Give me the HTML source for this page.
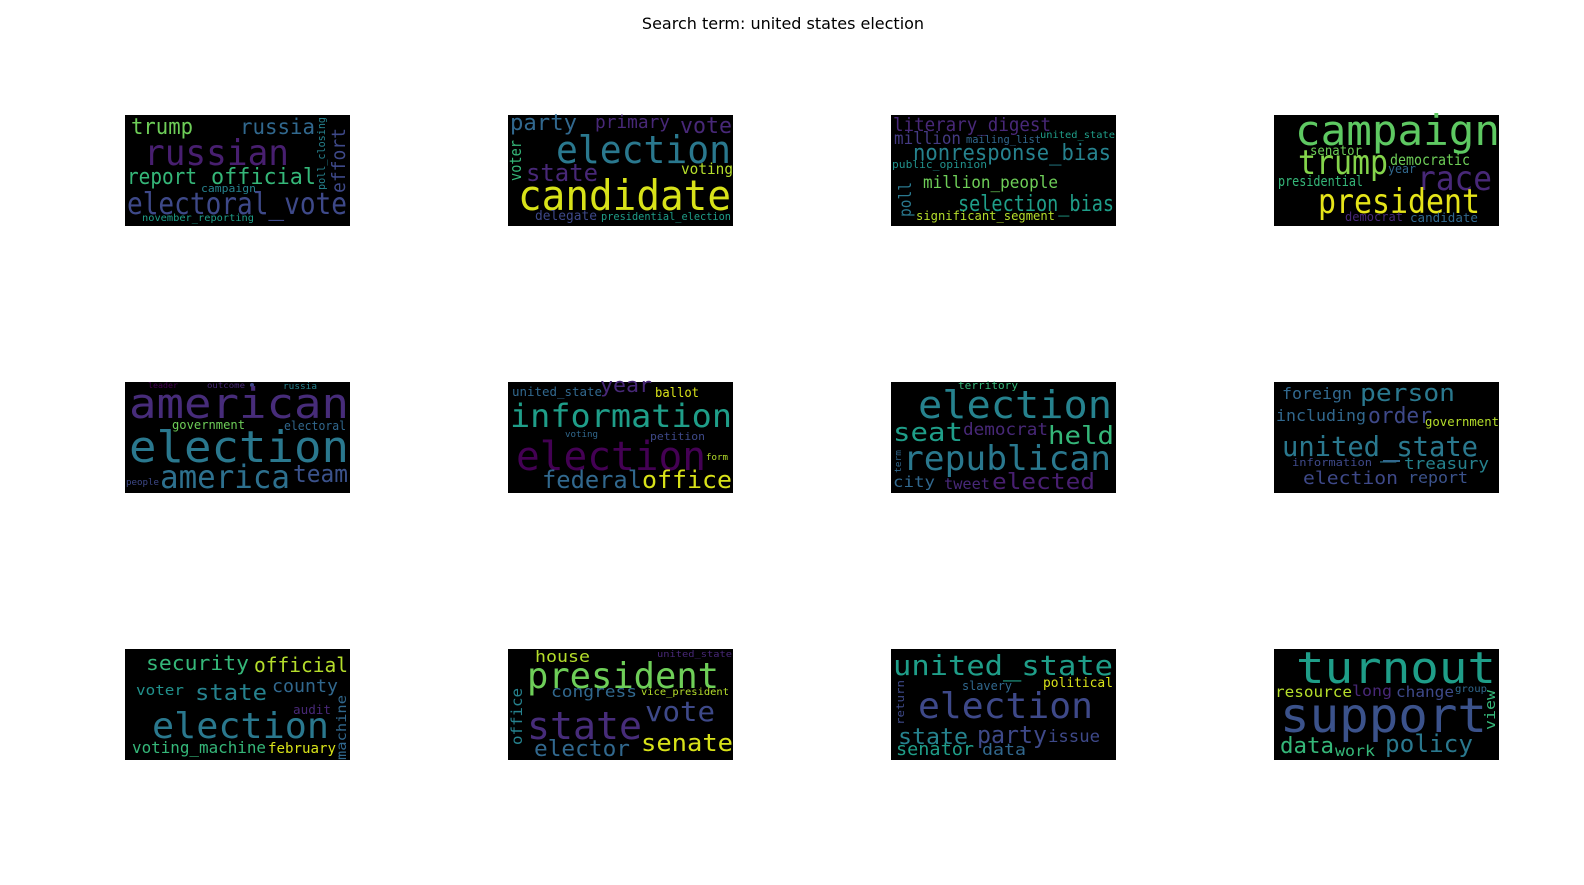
<!DOCTYPE html>
<html><head><meta charset="utf-8"><style>
html,body{margin:0;padding:0;background:#fff;overflow:hidden;width:1584px;height:885px;}
svg{display:block;position:absolute;left:0;top:0}
.w text{font-family:"DejaVu Sans Mono","Liberation Mono",monospace;}
</style></head><body>
<svg width="1584" height="885" viewBox="0 0 1584 885" xmlns="http://www.w3.org/2000/svg">
<rect width="1584" height="885" fill="#fff"/>
<text x="783" y="29" text-anchor="middle" font-family="DejaVu Sans, Liberation Sans, sans-serif" font-size="16" fill="#000">Search term: united states election</text>
<g fill="#000">
<rect x="125" y="115" width="225" height="111"/><rect x="508" y="115" width="225" height="111"/><rect x="891" y="115" width="225" height="111"/><rect x="1274" y="115" width="225" height="111"/>
<rect x="125" y="382" width="225" height="111"/><rect x="508" y="382" width="225" height="111"/><rect x="891" y="382" width="225" height="111"/><rect x="1274" y="382" width="225" height="111"/>
<rect x="125" y="649" width="225" height="111"/><rect x="508" y="649" width="225" height="111"/><rect x="891" y="649" width="225" height="111"/><rect x="1274" y="649" width="225" height="111"/>
</g>
<g class="w">
<text x="131" y="134" font-size="22" fill="#6ece58" textLength="62" lengthAdjust="spacingAndGlyphs">trump</text>
<text x="240" y="134" font-size="21" fill="#31688e" textLength="75" lengthAdjust="spacingAndGlyphs">russia</text>
<text x="144" y="165" font-size="36" fill="#481f70" textLength="145" lengthAdjust="spacingAndGlyphs">russian</text>
<text x="127" y="184" font-size="22" fill="#35b779" textLength="70" lengthAdjust="spacingAndGlyphs">report</text>
<text x="211" y="184" font-size="22" fill="#35b779" textLength="105" lengthAdjust="spacingAndGlyphs">official</text>
<text x="201" y="192" font-size="11" fill="#26828e" textLength="55" lengthAdjust="spacingAndGlyphs">campaign</text>
<text x="127" y="214" font-size="30" fill="#3e4989" textLength="220" lengthAdjust="spacingAndGlyphs">electoral_vote</text>
<text x="142" y="221" font-size="10" fill="#1f9e89" textLength="112" lengthAdjust="spacingAndGlyphs">november_reporting</text>
<text transform="translate(325,190) rotate(-90)" font-size="11" fill="#26828e" textLength="73" lengthAdjust="spacingAndGlyphs">poll_closing</text>
<text transform="translate(345,193) rotate(-90)" font-size="19" fill="#3e4989" textLength="65" lengthAdjust="spacingAndGlyphs">effort</text>
<text x="510" y="130" font-size="22" fill="#31688e" textLength="67" lengthAdjust="spacingAndGlyphs">party</text>
<text x="595" y="128" font-size="18" fill="#482878" textLength="75" lengthAdjust="spacingAndGlyphs">primary</text>
<text x="680" y="133" font-size="22" fill="#482878" textLength="52" lengthAdjust="spacingAndGlyphs">vote</text>
<text x="556" y="163" font-size="38" fill="#2a788e" textLength="175" lengthAdjust="spacingAndGlyphs">election</text>
<text x="526" y="181" font-size="24" fill="#482878" textLength="72" lengthAdjust="spacingAndGlyphs">state</text>
<text transform="translate(521,181) rotate(-90)" font-size="16" fill="#35b779" textLength="41" lengthAdjust="spacingAndGlyphs">voter</text>
<text x="681" y="174" font-size="15" fill="#b5de2b" textLength="52" lengthAdjust="spacingAndGlyphs">voting</text>
<text x="518" y="210" font-size="42" fill="#d8e219" textLength="213" lengthAdjust="spacingAndGlyphs">candidate</text>
<text x="535" y="220" font-size="13" fill="#3e4989" textLength="62" lengthAdjust="spacingAndGlyphs">delegate</text>
<text x="601" y="220" font-size="11" fill="#1f9e89" textLength="130" lengthAdjust="spacingAndGlyphs">presidential_election</text>
<text x="893" y="131" font-size="19" fill="#482878" textLength="158" lengthAdjust="spacingAndGlyphs">literary_digest</text>
<text x="894" y="144" font-size="17" fill="#443a83" textLength="67" lengthAdjust="spacingAndGlyphs">million</text>
<text x="966" y="143" font-size="11" fill="#31688e" textLength="75" lengthAdjust="spacingAndGlyphs">mailing_list</text>
<text x="1040" y="138" font-size="10" fill="#1f9e89" textLength="75" lengthAdjust="spacingAndGlyphs">united_state</text>
<text x="913" y="160" font-size="22" fill="#26828e" textLength="198" lengthAdjust="spacingAndGlyphs">nonresponse_bias</text>
<text x="892" y="168" font-size="11" fill="#21918c" textLength="95" lengthAdjust="spacingAndGlyphs">public_opinion</text>
<text x="923" y="188" font-size="17" fill="#6ece58" textLength="135" lengthAdjust="spacingAndGlyphs">million_people</text>
<text transform="translate(911,217) rotate(-90)" font-size="17" fill="#2a788e" textLength="35" lengthAdjust="spacingAndGlyphs">poll</text>
<text x="958" y="211" font-size="22" fill="#1f9e89" textLength="156" lengthAdjust="spacingAndGlyphs">selection_bias</text>
<text x="916" y="220" font-size="12" fill="#b5de2b" textLength="139" lengthAdjust="spacingAndGlyphs">significant_segment</text>
<text x="1295" y="145" font-size="42" fill="#5ec962" textLength="205" lengthAdjust="spacingAndGlyphs">campaign</text>
<text x="1310" y="155" font-size="13" fill="#6ece58" textLength="52" lengthAdjust="spacingAndGlyphs">senator</text>
<text x="1298" y="174" font-size="34" fill="#84d44b" textLength="90" lengthAdjust="spacingAndGlyphs">trump</text>
<text x="1390" y="165" font-size="15" fill="#6ece58" textLength="80" lengthAdjust="spacingAndGlyphs">democratic</text>
<text x="1388" y="173" font-size="12" fill="#31688e" textLength="28" lengthAdjust="spacingAndGlyphs">year</text>
<text x="1278" y="186" font-size="14" fill="#35b779" textLength="85" lengthAdjust="spacingAndGlyphs">presidential</text>
<text x="1417" y="190" font-size="34" fill="#482878" textLength="75" lengthAdjust="spacingAndGlyphs">race</text>
<text x="1318" y="213" font-size="34" fill="#e5e419" textLength="162" lengthAdjust="spacingAndGlyphs">president</text>
<text x="1345" y="221" font-size="12" fill="#482878" textLength="58" lengthAdjust="spacingAndGlyphs">democrat</text>
<text x="1410" y="222" font-size="12" fill="#31688e" textLength="68" lengthAdjust="spacingAndGlyphs">candidate</text>
<text x="148" y="388" font-size="8" fill="#440154" textLength="30" lengthAdjust="spacingAndGlyphs">leader</text>
<text x="207" y="388" font-size="8" fill="#482878" textLength="38" lengthAdjust="spacingAndGlyphs">outcome</text>
<circle cx="252" cy="385" r="2" fill="#3e4989"/>
<text x="283" y="389" font-size="9" fill="#26828e" textLength="34" lengthAdjust="spacingAndGlyphs">russia</text>
<text x="129" y="418" font-size="42" fill="#472c7a" textLength="220" lengthAdjust="spacingAndGlyphs">american</text>
<text x="172" y="429" font-size="12" fill="#6ece58" textLength="73" lengthAdjust="spacingAndGlyphs">government</text>
<text x="284" y="430" font-size="12" fill="#31688e" textLength="62" lengthAdjust="spacingAndGlyphs">electoral</text>
<text x="129" y="462" font-size="44" fill="#2a788e" textLength="220" lengthAdjust="spacingAndGlyphs">election</text>
<text x="160" y="488" font-size="32" fill="#2d708e" textLength="130" lengthAdjust="spacingAndGlyphs">america</text>
<text x="293" y="482" font-size="24" fill="#3b528b" textLength="55" lengthAdjust="spacingAndGlyphs">team</text>
<text x="126" y="485" font-size="9" fill="#3e4989" textLength="33" lengthAdjust="spacingAndGlyphs">people</text>
<text x="512" y="396" font-size="12" fill="#31688e" textLength="90" lengthAdjust="spacingAndGlyphs">united_state</text>
<text x="600" y="392" font-size="20" fill="#482878" textLength="52" lengthAdjust="spacingAndGlyphs">year</text>
<text x="655" y="397" font-size="13" fill="#d8e219" textLength="44" lengthAdjust="spacingAndGlyphs">ballot</text>
<text x="510" y="427" font-size="32" fill="#1f9e89" textLength="222" lengthAdjust="spacingAndGlyphs">information</text>
<text x="565" y="437" font-size="9" fill="#31688e" textLength="33" lengthAdjust="spacingAndGlyphs">voting</text>
<text x="650" y="440" font-size="11" fill="#3e4989" textLength="55" lengthAdjust="spacingAndGlyphs">petition</text>
<text x="516" y="470" font-size="40" fill="#440154" textLength="190" lengthAdjust="spacingAndGlyphs">election</text>
<text x="706" y="460" font-size="9" fill="#b5de2b" textLength="22" lengthAdjust="spacingAndGlyphs">form</text>
<text x="542" y="488" font-size="24" fill="#31688e" textLength="100" lengthAdjust="spacingAndGlyphs">federal</text>
<text x="642" y="488" font-size="24" fill="#d8e219" textLength="90" lengthAdjust="spacingAndGlyphs">office</text>
<text x="958" y="389" font-size="11" fill="#35b779" textLength="60" lengthAdjust="spacingAndGlyphs">territory</text>
<text x="918" y="418" font-size="38" fill="#26828e" textLength="194" lengthAdjust="spacingAndGlyphs">election</text>
<text x="893" y="441" font-size="26" fill="#1f9e89" textLength="70" lengthAdjust="spacingAndGlyphs">seat</text>
<text x="963" y="435" font-size="17" fill="#482878" textLength="85" lengthAdjust="spacingAndGlyphs">democrat</text>
<text x="1048" y="444" font-size="25" fill="#35b779" textLength="66" lengthAdjust="spacingAndGlyphs">held</text>
<text x="903" y="470" font-size="34" fill="#2a788e" textLength="208" lengthAdjust="spacingAndGlyphs">republican</text>
<text transform="translate(901,473) rotate(-90)" font-size="9" fill="#31688e" textLength="23" lengthAdjust="spacingAndGlyphs">term</text>
<text x="893" y="487" font-size="15" fill="#31688e" textLength="42" lengthAdjust="spacingAndGlyphs">city</text>
<text x="944" y="489" font-size="15" fill="#482878" textLength="46" lengthAdjust="spacingAndGlyphs">tweet</text>
<text x="992" y="489" font-size="22" fill="#481f70" textLength="103" lengthAdjust="spacingAndGlyphs">elected</text>
<text x="1282" y="399" font-size="16" fill="#31688e" textLength="70" lengthAdjust="spacingAndGlyphs">foreign</text>
<text x="1360" y="401" font-size="24" fill="#2a788e" textLength="95" lengthAdjust="spacingAndGlyphs">person</text>
<text x="1276" y="421" font-size="16" fill="#31688e" textLength="90" lengthAdjust="spacingAndGlyphs">including</text>
<text x="1368" y="423" font-size="22" fill="#3e4989" textLength="64" lengthAdjust="spacingAndGlyphs">order</text>
<text x="1425" y="426" font-size="12" fill="#b5de2b" textLength="74" lengthAdjust="spacingAndGlyphs">government</text>
<text x="1282" y="456" font-size="28" fill="#2a788e" textLength="196" lengthAdjust="spacingAndGlyphs">united_state</text>
<rect x="1383" y="460" width="17" height="2" fill="#31688e"/>
<text x="1292" y="466" font-size="11" fill="#3e4989" textLength="80" lengthAdjust="spacingAndGlyphs">information</text>
<text x="1404" y="469" font-size="16" fill="#26828e" textLength="85" lengthAdjust="spacingAndGlyphs">treasury</text>
<text x="1303" y="484" font-size="18" fill="#3e4989" textLength="95" lengthAdjust="spacingAndGlyphs">election</text>
<text x="1408" y="483" font-size="16" fill="#3b528b" textLength="60" lengthAdjust="spacingAndGlyphs">report</text>
<text x="146" y="670" font-size="20" fill="#35b779" textLength="103" lengthAdjust="spacingAndGlyphs">security</text>
<text x="254" y="672" font-size="20" fill="#b5de2b" textLength="94" lengthAdjust="spacingAndGlyphs">official</text>
<text x="136" y="695" font-size="14" fill="#21918c" textLength="48" lengthAdjust="spacingAndGlyphs">voter</text>
<text x="195" y="700" font-size="22" fill="#26828e" textLength="72" lengthAdjust="spacingAndGlyphs">state</text>
<text x="272" y="692" font-size="18" fill="#31688e" textLength="66" lengthAdjust="spacingAndGlyphs">county</text>
<text x="293" y="714" font-size="12" fill="#482878" textLength="38" lengthAdjust="spacingAndGlyphs">audit</text>
<text x="152" y="738" font-size="36" fill="#2a788e" textLength="177" lengthAdjust="spacingAndGlyphs">election</text>
<text transform="translate(346,760) rotate(-90)" font-size="13" fill="#31688e" textLength="65" lengthAdjust="spacingAndGlyphs">machine</text>
<text x="132" y="753" font-size="16" fill="#35b779" textLength="134" lengthAdjust="spacingAndGlyphs">voting_machine</text>
<text x="268" y="753" font-size="14" fill="#d8e219" textLength="68" lengthAdjust="spacingAndGlyphs">february</text>
<text x="535" y="662" font-size="16" fill="#b5de2b" textLength="55" lengthAdjust="spacingAndGlyphs">house</text>
<text x="657" y="657" font-size="9" fill="#482878" textLength="75" lengthAdjust="spacingAndGlyphs">united_state</text>
<text x="527" y="688" font-size="36" fill="#6ece58" textLength="192" lengthAdjust="spacingAndGlyphs">president</text>
<text x="551" y="697" font-size="16" fill="#31688e" textLength="86" lengthAdjust="spacingAndGlyphs">congress</text>
<text x="641" y="695" font-size="10" fill="#b5de2b" textLength="88" lengthAdjust="spacingAndGlyphs">vice_president</text>
<text transform="translate(522,745) rotate(-90)" font-size="15" fill="#26828e" textLength="57" lengthAdjust="spacingAndGlyphs">office</text>
<text x="645" y="721" font-size="28" fill="#3e4989" textLength="70" lengthAdjust="spacingAndGlyphs">vote</text>
<text x="527" y="739" font-size="38" fill="#472c7a" textLength="115" lengthAdjust="spacingAndGlyphs">state</text>
<text x="641" y="751" font-size="24" fill="#d8e219" textLength="92" lengthAdjust="spacingAndGlyphs">senate</text>
<text x="534" y="756" font-size="22" fill="#31688e" textLength="96" lengthAdjust="spacingAndGlyphs">elector</text>
<text x="893" y="675" font-size="28" fill="#1f9e89" textLength="220" lengthAdjust="spacingAndGlyphs">united_state</text>
<text x="962" y="690" font-size="12" fill="#31688e" textLength="50" lengthAdjust="spacingAndGlyphs">slavery</text>
<text x="1043" y="687" font-size="13" fill="#d8e219" textLength="70" lengthAdjust="spacingAndGlyphs">political</text>
<text transform="translate(904,725) rotate(-90)" font-size="11" fill="#3e4989" textLength="45" lengthAdjust="spacingAndGlyphs">return</text>
<text x="918" y="718" font-size="36" fill="#3e4989" textLength="175" lengthAdjust="spacingAndGlyphs">election</text>
<text x="898" y="744" font-size="22" fill="#26828e" textLength="70" lengthAdjust="spacingAndGlyphs">state</text>
<text x="977" y="743" font-size="24" fill="#3e4989" textLength="70" lengthAdjust="spacingAndGlyphs">party</text>
<text x="1048" y="742" font-size="17" fill="#3e4989" textLength="52" lengthAdjust="spacingAndGlyphs">issue</text>
<text x="896" y="755" font-size="18" fill="#1f9e89" textLength="78" lengthAdjust="spacingAndGlyphs">senator</text>
<text x="982" y="755" font-size="16" fill="#31688e" textLength="44" lengthAdjust="spacingAndGlyphs">data</text>
<text x="1296" y="683" font-size="44" fill="#1f9e89" textLength="200" lengthAdjust="spacingAndGlyphs">turnout</text>
<text x="1275" y="697" font-size="15" fill="#b5de2b" textLength="77" lengthAdjust="spacingAndGlyphs">resource</text>
<text x="1352" y="696" font-size="15" fill="#482878" textLength="40" lengthAdjust="spacingAndGlyphs">long</text>
<text x="1396" y="697" font-size="15" fill="#3e4989" textLength="58" lengthAdjust="spacingAndGlyphs">change</text>
<text x="1455" y="692" font-size="10" fill="#31688e" textLength="32" lengthAdjust="spacingAndGlyphs">group</text>
<text x="1280" y="732" font-size="48" fill="#3b528b" textLength="207" lengthAdjust="spacingAndGlyphs">support</text>
<text transform="translate(1495,730) rotate(-90)" font-size="14" fill="#35b779" textLength="40" lengthAdjust="spacingAndGlyphs">view</text>
<text x="1280" y="753" font-size="22" fill="#35b779" textLength="54" lengthAdjust="spacingAndGlyphs">data</text>
<text x="1335" y="756" font-size="15" fill="#35b779" textLength="40" lengthAdjust="spacingAndGlyphs">work</text>
<text x="1385" y="752" font-size="24" fill="#2a788e" textLength="88" lengthAdjust="spacingAndGlyphs">policy</text>
</g>
</svg>
</body></html>
